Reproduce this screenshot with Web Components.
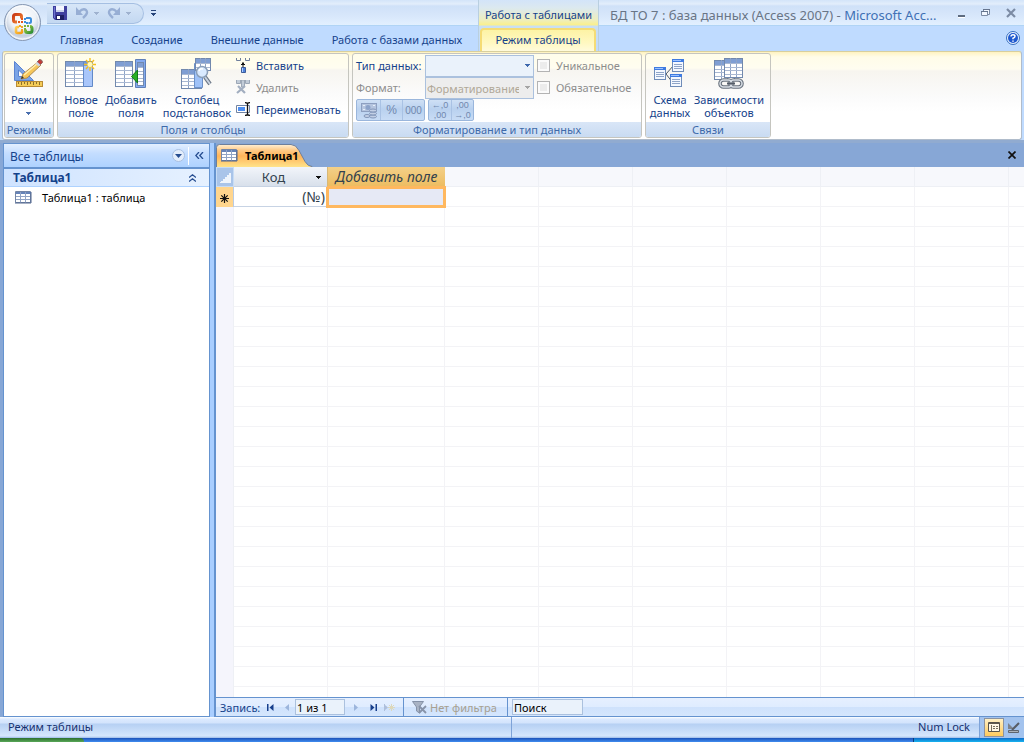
<!DOCTYPE html>
<html lang="ru">
<head>
<meta charset="utf-8">
<meta name="viewport" content="width=device-width, initial-scale=1">
<title>БД ТО 7 : база данных (Access 2007) - Microsoft Access</title>
<style>
html,body{margin:0;height:100%}
body{font:11px/13px "Noto Sans","Open Sans",sans-serif;color:#15428b;background:#bfdbff;overflow:hidden}
</style>
</head>
<body>
<access-window></access-window>
<script>
const RESET = `*{box-sizing:border-box}button,input,select{font:inherit;color:inherit;margin:0;padding:0;border:0;background:none}a{color:inherit;text-decoration:none}`;

function define(name, html) {
  const template = document.createElement('template');
  template.innerHTML = `<style>${RESET}</style>` + html;
  customElements.define(name, class extends HTMLElement {
    constructor() {
      super();
      this.attachShadow({mode: 'open'}).append(template.content.cloneNode(true));
    }
  });
}

const gridTable = (x, y, w, h, cols, rows) => {
  let s = `<rect x="${x + .5}" y="${y + .5}" width="${w}" height="${h}" fill="#fff" stroke="#7289ad"/><path fill="#7f9ed3" d="M${x + 1} ${y + 1}h${w - 1}v4h-${w - 1}z"/>`;
  for (let i = 1; i < cols; i++) s += `<path stroke="#8ea3c6" d="M${x + .5 + Math.round(w * i / cols)} ${y}v${h}"/>`;
  for (let i = 0; i < rows; i++) s += `<path stroke="#a9b8d2" d="M${x + 1} ${y + 5.5 + Math.round((h - 5) * i / rows)}h${w - 1}"/>`;
  return s;
};
const listBox = (x, y) => `<rect x="${x + .5}" y="${y + .5}" width="11" height="12" fill="#f4f8ff" stroke="#6f8cb8"/><path fill="#3f7be0" d="M${x} ${y}h12v3h-12z"/><path fill="#9cc2ff" d="M${x + 1} ${y + 1}h8v1h-8z"/><path stroke="#8fa5c8" d="M${x + 2} ${y + 5.5}h8m-8 2h8m-8 2h8"/>`;
const ICONS = {
  office: [40, 40, `<defs><radialGradient id="o" cx=".5" cy=".35" r=".65"><stop offset="0" stop-color="#fff"/><stop offset=".55" stop-color="#eef2f8"/><stop offset=".8" stop-color="#c3cede"/><stop offset="1" stop-color="#e7eef8"/></radialGradient><linearGradient id="r" x1="0" y1="0" x2="1" y2="1"><stop offset="0" stop-color="#c93a17"/><stop offset="1" stop-color="#f58a35"/></linearGradient><linearGradient id="y" x1="0" y1="0" x2="1" y2="1"><stop offset="0" stop-color="#ffcf57"/><stop offset="1" stop-color="#f39a12"/></linearGradient><linearGradient id="gr" x1="0" y1="0" x2="1" y2="1"><stop offset="0" stop-color="#a2cc3d"/><stop offset="1" stop-color="#2f8f35"/></linearGradient></defs><circle cx="20.500" cy="20.500" r="18" fill="url(#o)" stroke="#8597b3"/><circle cx="20.500" cy="20.500" r="16.500" fill="none" stroke="#fff" opacity=".8"/><g fill="none"><path stroke="url(#r)" stroke-width="3" d="M15 20h-1.500q-2 0-2-2v-3.500q0-2 2-2h4q2 0 2 2v2"/><path stroke="#e2561f" stroke-width="2" stroke-dasharray="2 1" d="M16 20h4v-4"/><path stroke="#3c8edb" stroke-width="2" d="M24 16h3.500q1.500 0 1.500 1.500v2q0 1.500-1.500 1.500h-1"/><path stroke="#3c8edb" stroke-width="2" stroke-dasharray="2 1" d="M23 16v5h4"/><path stroke="url(#y)" stroke-width="2.600" d="M17 25h-1.500q-1.500 0-1.500 1.500v3q0 1.500 1.500 1.500h3q1.500 0 1.500-1.500v-1"/><path stroke="#efa624" stroke-width="2" stroke-dasharray="2 1" d="M17 24h3v5"/><path stroke="url(#gr)" stroke-width="3" d="M28 24.500q2 0 2 2v2q0 2-2 2h-2.500q-2 0-2-2v-1"/><path stroke="#7bb33a" stroke-width="2" stroke-dasharray="2 1" d="M23 28v-4h5"/></g>`],
  save: [14, 14, `<path fill="#3f3f9e" d="M0 0h14v14H2l-2-2z"/><path fill="#6d72d0" d="M1 1h1v11h-1z"/><path fill="#f4f6ff" d="M3 0h8v6h-8z"/><path fill="#c9d0ec" d="M3 4h8v2h-8z"/><path fill="#1d1d62" d="M3 9h8v5h-8z"/><path fill="#fff" d="M4 10h3v3h-3z"/>`],
  undo: [14, 12, `<path fill="none" stroke="#97aed4" stroke-width="2.400" d="M4 5q4-4 7-2 3 3-3 8"/><path fill="#97aed4" d="M1 0v8h7z"/>`],
  redo: [14, 12, `<path fill="none" stroke="#97aed4" stroke-width="2.400" d="M10 5q-4-4-7-2-3 3 3 8"/><path fill="#97aed4" d="M13 0v8h-7z"/>`],
  arrow: [5, 3, `<path fill="currentColor" d="M0 0h5v1h-1v1h-1v1h-1v-1h-1v-1h-1z"/>`],
  custom: [5, 7, `<path fill="currentColor" d="M0 0h5v1h-5zM0 3h5v1h-1v1h-1v1h-1v-1h-1v-1h-1z"/>`],
  min: [9, 10, `<path fill="#fff" d="M1 9h7v1h-7z"/><path fill="#5d6b80" d="M1 7h7v2h-7z"/>`],
  restore: [10, 10, `<path fill="#f2f7ff" stroke="#7c8ba4" d="M2.500 1.500h6v5h-6z"/><path fill="#f2f7ff" stroke="#7c8ba4" d="M.500 3.500h6v4h-6z"/><path fill="#66758e" d="M2 1h7v1h-7zM0 3h7v1h-7z"/>`],
  close: [10, 10, `<path fill="none" stroke="#7c8ba4" stroke-width="2.200" d="M1 1l8 8M9 1l-8 8"/>`],
  help: [14, 14, `<circle cx="7" cy="7" r="6.500" fill="#e9f3ff" stroke="#386fc0"/><circle cx="7" cy="7" r="5" fill="#1f59cf"/><path fill="none" stroke="#fff" stroke-width="1.500" d="M5 5.500q0-1.800 2-1.800t2 1.500q0 1.200-2 2v1M7 9.500v1.200"/>`],
  design: [32, 32, `<path fill="#7ba4e6" stroke="#5b84d0" d="M1.500 3.500v19h19z"/><path fill="#fdfcf8" stroke="#5b84d0" d="M5.500 12v6.500h7z"/><path d="M8 21l2-5L25 4l3 3-14 13z" fill="#f6c65a" stroke="#b08a4c"/><path d="M11 17l14-12" stroke="#fff0b0" stroke-width="1.500"/><path d="M24 4l2.500-2.500q3 0 3 3L27 7z" fill="#c33c35" stroke="#8d6a67"/><path d="M22.500 5.500l3 3 2-1.500-3-3z" fill="#ccd5df"/><path d="M8 21l1-3 2 2z" fill="#333"/><rect x="3.500" y="23.500" width="26" height="5" fill="#f5cc58" stroke="#b98b34"/><path stroke="#8d712c" d="M5.500 24v2m3-2v3m3-3v2m3-2v3m3-3v2m3-2v3m3-3v2m3-2v3"/>`],
  newField: [32, 32, gridTable(0, 3, 18, 25, 2, 5) + `<path fill="#a9c6fa" stroke="#6289c8" d="M18.500 3.500h9v25h-9z"/><path fill="#7898d0" d="M19 4h8v4h-8z"/><path stroke="#f5c020" stroke-width="1.400" d="M25 0v13M19 6.500h12M21 2l8 9M29 2l-8 9"/><circle cx="25" cy="6.500" r="2.500" fill="#fff9ba"/>`],
  addField: [32, 32, gridTable(0, 3, 17, 25, 2, 5) + `<path fill="#83aaf0" stroke="#6080b8" d="M20.500 1.500h10v28h-10z"/>` + gridTable(22, 4, 6, 23, 1, 5) + `<path fill="#27ae25" stroke="#137816" d="M22.500 12v13l-6-6.500z"/>`],
  lookup: [32, 32, gridTable(0, 11, 20, 19, 3, 4) + `<path fill="#9fc2f8" stroke="#6c91c8" d="M13.500 5.500h8v24h-8z"/>` + gridTable(14, 0, 15, 12, 3, 2) + `<path stroke="#697584" stroke-width="4" d="M24 19l5 7"/><path stroke="#c8d2df" stroke-width="2" d="M24 19l5 7"/><circle cx="21" cy="14" r="5.500" fill="#d9eaff" stroke="#8b9fb8" stroke-width="1.500"/><path d="M18 13q1-3 4-2" fill="none" stroke="#fff" stroke-width="1.500"/>`],
  insert: [14, 16, `<path fill="none" stroke="#6f7f9c" d="M.500 1v2.500h4V1M9.500 1v2.500h4V1"/><path stroke="#111" fill="none" d="M7 5v5M5 7.500h4M6 6.500h2"/><path fill="#4f83dd" stroke="#3c5c9a" d="M5.500 10.500h4v5h-4z"/><path fill="#b0ceff" d="M6 11h1v4h-1z"/>`],
  remove: [14, 14, `<path fill="#c2ccd8" stroke="#9ca7b6" d="M.500 0v3.500h4V0M9.500 0v3.500h4V0M5.500 0h3v7h-3z"/><path stroke="#a2aec0" stroke-width="2.200" d="M2 6l7 7M9 6l-8 7"/>`],
  rename: [16, 14, `<path fill="#fff" stroke="#7183a1" d="M.500 3.500h13v7h-13z"/><path fill="#4d8ff2" d="M2 5h7v4h-7z"/><path fill="none" stroke="#111" stroke-width="1.300" d="M9 .600q2 0 2.500 1 .500-1 2.500-1M11.500 1v11M9 13.400q2 0 2.500-1 .500 1 2.500 1"/>`],
  money: [18, 18, `<rect x="1.500" y="2.500" width="15" height="8" fill="#b5c5df" stroke="#8d9fc0"/><circle cx="8" cy="6.500" r="2.500" fill="#8ba2c9"/><path stroke="#e5edf9" d="M3 4.500h2m8 0h2m-12 4h2"/><g fill="#c2cfe5" stroke="#8296b9"><ellipse cx="13" cy="15.500" rx="3.500" ry="1.500"/><ellipse cx="13" cy="12.500" rx="3.500" ry="1.500"/><ellipse cx="13" cy="9.500" rx="3.500" ry="1.500"/><ellipse cx="7" cy="15" rx="3" ry="1.500"/></g>`],
  schema: [32, 32, `<path fill="none" stroke="#4e5968" d="M12 16l8-9M12 16l7 9"/>` + listBox(0, 9) + listBox(18, 1) + listBox(16, 16)],
  depends: [34, 32, gridTable(2, 2, 20, 19, 3, 4) + gridTable(12, 0, 18, 19, 3, 4) + `<g fill="none" stroke="#68717d" stroke-width="3.600"><rect x="8" y="22" width="12" height="7" rx="3.500"/><rect x="18" y="22" width="12" height="7" rx="3.500"/></g><g fill="none" stroke="#d7dde4" stroke-width="1.500"><rect x="8" y="22" width="12" height="7" rx="3.500"/><rect x="18" y="22" width="12" height="7" rx="3.500"/></g><path stroke="#545c68" stroke-width="2" d="M15 25.500h8"/>`],
  table: [17, 13, `<path fill="#fff" stroke="#7385a5" d="M.500.500h15v11h-15z"/><path fill="#6583b8" d="M1 1h15v2h-15z"/><path stroke="#91a4c5" d="M5.500 1v11M10.500 1v11M1 5.500h14M1 8.500h14"/><path stroke="#50648c" d="M0 12h16M16 1v11"/>`],
  chevronLeft: [9, 7, `<path fill="none" stroke="#274e91" stroke-width="1.300" d="M4 0L.800 3.500 4 7M8 0L4.800 3.500 8 7"/>`],
  chevronUp: [7, 8, `<path fill="none" stroke="#274e91" stroke-width="1.300" d="M0 3.500L3.500.800 7 3.500M0 7.500l3.500-2.700L7 7.500"/>`],
  dropCircle: [13, 13, `<circle cx="6.500" cy="6.500" r="6" fill="#e3edfb" stroke="#a8bfe0"/><path fill="#274e91" d="M3 5h7l-3.500 4z"/>`],
  blackClose: [8, 8, `<path stroke="#111" stroke-width="1.700" d="M.500.500l7 7M7.500.500l-7 7"/>`],
  star: [9, 9, `<path stroke="#111" stroke-width="1.200" d="M4.500 0v9M0 4.500h9M1.300 1.300l6.400 6.400M7.700 1.300L1.300 7.700"/>`],
  first: [7, 7, `<path fill="#173f8c" d="M0 0h1.500v7h-1.500zM6.500 0v7L2.500 3.500z"/>`],
  prev: [4, 7, `<path fill="#9cb5dc" d="M4 0v7L0 3.500z"/>`],
  next: [4, 7, `<path fill="#9cb5dc" d="M0 0v7l4-3.500z"/>`],
  last: [7, 7, `<path fill="#173f8c" d="M5.500 0h1.500v7h-1.500zM.500 0v7l4-3.500z"/>`],
  newRecord: [11, 7, `<path fill="#aebfdb" d="M0 0h1v7h-1zM1 1v5l3-2.500z"/><path stroke="#ddd8bb" d="M7.500 0v7M4 3.500h7M5 1l5 5M10 1l-5 5"/>`],
  filter: [15, 13, `<path fill="#a9b3c4" stroke="#8592a8" d="M.500.500h11L7.500 6v6l-3-2V6z"/><path stroke="#8793a9" stroke-width="1.800" d="M7 5l7 7M14 5l-7 7"/>`],
  sheetView: [12, 11, `<path fill="#fff8e6" stroke="#57534a" d="M.500.500h11v9h-11z"/><path fill="#5d584d" d="M1 1h10v1h-10z"/><path stroke="#77705f" d="M3.500 3v6M5 4.500h2m1 0h2M5 6.500h2m1 0h2"/>`],
  designView: [12, 12, `<path fill="#7d838c" d="M0 1v6h6z"/><path stroke="#565c66" stroke-width="2" d="M4 8l7-7"/><path fill="#aeb3ba" stroke="#5e646e" d="M.500 8.500h10v2h-10z"/>`]
};

customElements.define('ui-icon', class extends HTMLElement {
  constructor() {
    super();
    this.attachShadow({mode: 'open'});
  }
  connectedCallback() {
    const [w, h, body] = ICONS[this.getAttribute('name')];
    this.shadowRoot.innerHTML = `<style>:host{display:inline-flex;flex:none}svg{display:block}</style><svg width="${w}" height="${h}" viewBox="0 0 ${w} ${h}" aria-hidden="true">${body}</svg>`;
  }
});

define('quick-access', `<style>
:host{display:flex;align-items:center;height:26px;padding-left:47px;color:#27447a}
.bar{display:flex;align-items:center;gap:8px;height:21px;width:97px;padding:0 6px;border:1px solid #a5bfe2;border-left:0;border-radius:0 11px 11px 0;background:linear-gradient(#d7e6f8,#c3d8f1)}
button{display:flex;align-items:center}
.muted{color:#9fb2cf;gap:5px}.more{margin-left:7px}
</style>
<div class="bar"><button aria-label="Сохранить"><ui-icon name="save"></ui-icon></button><button class="muted" aria-label="Отменить"><ui-icon name="undo"></ui-icon><ui-icon name="arrow"></ui-icon></button><button class="muted" aria-label="Вернуть"><ui-icon name="redo"></ui-icon><ui-icon name="arrow"></ui-icon></button></div>
<button class="more" aria-label="Настройка панели"><ui-icon name="custom"></ui-icon></button>`);

define('window-header', `<style>
:host{display:flex;flex:none;height:51px;position:relative;background:linear-gradient(#d3e4f9 0,#e3eefb 4px,#cfe1f8 6px,#d8e7fb 16px,#e2f0ff 25px,#b0d4f5 25px,#b0d4f5 26px,#bfdbff 26px)}
.office{position:absolute;left:2px;top:2px;z-index:1}
.left{flex:0 0 478px}
.tabs{display:flex;padding-left:46px;height:25px;align-items:center}
.tabs a{padding:2px 14px 0}
.context{flex:none;width:121px;border:solid #b9cfe0;border-width:0 1px;background:linear-gradient(#d3e4f9 0,#dce9ef 8px,#eeeebd 20px,#fbf08b 25px,#cadff2 26px,#bfdbff 51px);display:flex;flex-direction:column}
.caption{height:28px;padding-top:8px;text-align:center;white-space:nowrap}
.active{flex:1;margin:0 2px 0 1px;border:2px solid #f5dc75;border-bottom:0;border-radius:4px 4px 0 0;background:linear-gradient(#fdf3a5,#fff8c0 60%,#fffbdc);text-align:center;padding-top:3px}
.right{flex:1;min-width:0}
.title{display:flex;height:26px;align-items:center;padding:3px 8px 0 11px}
h1{flex:1;min-width:0;margin:0;font-size:13px;line-height:16px;font-weight:400;color:#697586;white-space:nowrap}
h1 span{color:#4070b5}
.controls{display:flex;gap:15px;padding-bottom:4px}
.controls button,.help{display:flex}
.help{margin:5px 4px 0 auto}
</style>
<button class="office" aria-label="Кнопка Office"><ui-icon name="office"></ui-icon></button>
<div class="left"><quick-access></quick-access><nav class="tabs"><a href="#">Главная</a><a href="#">Создание</a><a href="#">Внешние данные</a><a href="#">Работа с базами данных</a></nav></div>
<div class="context"><div class="caption">Работа с таблицами</div><a class="active" href="#">Режим таблицы</a></div>
<div class="right"><div class="title"><h1>БД ТО 7 : база данных (Access 2007) - <span>Microsoft Acc...</span></h1><div class="controls"><button aria-label="Свернуть"><ui-icon name="min"></ui-icon></button><button aria-label="Восстановить"><ui-icon name="restore"></ui-icon></button><button aria-label="Закрыть"><ui-icon name="close"></ui-icon></button></div></div><button class="help" aria-label="Справка"><ui-icon name="help"></ui-icon></button></div>`);

define('ribbon-group', `<style>
:host{display:flex;flex-direction:column;flex:none;border:1px solid #c5c5bf;border-radius:3px;overflow:hidden;background:linear-gradient(#fffdea 0,#fffdf0 14px,#f7f5f0 16px,#fbfbfb 40px,#fff 56px)}
.body{flex:1;display:flex;min-height:0}
.label{height:15px;line-height:15px;text-align:center;color:#3e6aaa;background:linear-gradient(#d9e6f7,#c9dbf2);white-space:nowrap}
</style><div class="body"><slot></slot></div><div class="label"><slot name="label"></slot></div>`);

define('ribbon-button', `<style>
:host{display:block;flex:none}
button{display:flex;flex-direction:column;align-items:center;width:100%;height:100%;padding-top:4px;white-space:nowrap}
.text{display:block;margin-top:3px;text-align:center}
</style><button><slot name="icon"></slot><span class="text"><slot></slot></span></button>`);

define('command-button', `<style>
:host{display:block}
:host([off]){color:#8d8d8d}
button{display:flex;align-items:center;height:22px;white-space:nowrap}
.icon{display:flex;width:20px}
</style><button><span class="icon"><slot name="icon"></slot></span><slot></slot></button>`);

define('format-controls', `<style>
:host{display:grid;grid-template-columns:69px 109px auto;grid-template-rows:22px 22px 22px;align-items:center;padding:1px 3px 0;flex:1}
label{padding-bottom:1px}
.off{color:#8d8d8d}
.combo{position:relative;display:flex;height:22px}
.combo ui-icon{position:absolute;right:4px;top:9px;pointer-events:none;color:#3c67ad}
select{appearance:none;width:109px;height:22px;border:1px solid #abc1de;background:#eaf2fb;color:#15428b;padding:0 14px 0 1px}
select:disabled{background:#ededed;color:#b0a898;opacity:1}.combo.dis ui-icon{color:#a5a5a5}
.check{display:flex;align-items:center;gap:6px;padding-left:3px;color:#8d8d8d}
input{appearance:none;width:13px;height:13px;border:1px solid #b3b3b3;background:#ececec;box-shadow:inset 0 0 0 2px #fbfbfb}
.bar{grid-column:1/-1;display:flex;gap:3px}
.set{display:flex;border:1px solid #9ab6dc;border-radius:2px;background:linear-gradient(#cfe0f5,#b9d1ef 45%,#c8dcf5)}
.set button{width:22px;height:20px;display:flex;align-items:center;justify-content:center;color:#7188ae}
.set.one button:first-child{width:23px}
.set button+button{border-left:1px solid #a9c2e4}
.num{font-family:"Liberation Sans",sans-serif;font-size:12px}.set .zeros{font-size:10px}
.dec{font:9px/10px "Liberation Sans",sans-serif}
.dec span{display:block;text-align:right}
</style>
<label for="type">Тип данных:</label><span class="combo"><select id="type"><option></option></select><ui-icon name="arrow"></ui-icon></span>
<label class="check"><input type="checkbox">Уникальное</label>
<label class="off" for="fmt">Формат:</label><span class="combo dis"><select id="fmt" disabled><option>Форматирование</option></select><ui-icon name="arrow"></ui-icon></span>
<label class="check"><input type="checkbox">Обязательное</label>
<div class="bar"><div class="set one"><button aria-label="Денежный"><ui-icon name="money"></ui-icon></button><button class="num">%</button><button class="num zeros">000</button></div><div class="set"><button class="dec">←,0<br>,00</button><button class="dec">,00<br>→,0</button></div></div>`);

define('access-ribbon', `<style>
:host{display:flex;flex:none;height:89px;gap:3px;margin:0 2px;padding:1px;border:1px solid #b0bccb;border-top-color:#d8cf9d;border-radius:3px;background:linear-gradient(#fff3c0 0,#fffce8 5px,#fffdf0 17px,#f7f5ef 19px,#fbfbfb 45px,#fff 60px);color:#15428b}
ribbon-group.a{width:50px}ribbon-group.b{width:292px}ribbon-group.c{width:290px}ribbon-group.d{width:126px}
.mode{width:48px}.n{width:46px}.f{width:54px}.l{width:78px}.s{width:48px}.o{width:70px}
.drop{display:block;line-height:9px;color:#4a6fae}
</style>
<ribbon-group class="a"><ribbon-button class="mode"><ui-icon slot="icon" name="design"></ui-icon>Режим<span class="drop"><ui-icon name="arrow"></ui-icon></span></ribbon-button><span slot="label">Режимы</span></ribbon-group>
<ribbon-group class="b"><ribbon-button class="n"><ui-icon slot="icon" name="newField"></ui-icon>Новое<br>поле</ribbon-button><ribbon-button class="f"><ui-icon slot="icon" name="addField"></ui-icon>Добавить<br>поля</ribbon-button><ribbon-button class="l"><ui-icon slot="icon" name="lookup"></ui-icon>Столбец<br>подстановок</ribbon-button><div class="cmds"><command-button><ui-icon slot="icon" name="insert"></ui-icon>Вставить</command-button><command-button off><ui-icon slot="icon" name="remove"></ui-icon>Удалить</command-button><command-button><ui-icon slot="icon" name="rename"></ui-icon>Переименовать</command-button></div><span slot="label">Поля и столбцы</span></ribbon-group>
<ribbon-group class="c"><format-controls></format-controls><span slot="label">Форматирование и тип данных</span></ribbon-group>
<ribbon-group class="d"><ribbon-button class="s"><ui-icon slot="icon" name="schema"></ui-icon>Схема<br>данных</ribbon-button><ribbon-button class="o"><ui-icon slot="icon" name="depends"></ui-icon>Зависимости<br>объектов</ribbon-button><span slot="label">Связи</span></ribbon-group>`);

define('nav-pane', `<style>
:host{display:flex;flex-direction:column;flex:none;width:207px;background:#fff;border:1px solid #6593cf}
.head{display:flex;align-items:center;height:25px;background:linear-gradient(#e3efff,#c4ddff 40%,#aed2ff);border-bottom:2px solid #6593cf}
h2{flex:1;margin:0;padding:2px 0 0 6px;font-size:12px;line-height:16px;font-weight:400}
button{display:flex;align-items:center;justify-content:center}
.collapse{width:21px;height:18px;margin-left:3px;border-left:1px solid #fff}
.group{display:flex;align-items:center;height:18px;padding:0 13px 0 9px;background:linear-gradient(90deg,#cfe3ff,#e6f1ff);border-bottom:1px solid #aed2ff;font-weight:700;font-size:12px;width:100%;justify-content:space-between}
.item{display:flex;align-items:center;gap:10px;height:21px;padding-left:11px;color:#000}
</style>
<div class="head"><h2>Все таблицы</h2><button aria-label="Выбор категории"><ui-icon name="dropCircle"></ui-icon></button><button class="collapse" aria-label="Свернуть область"><ui-icon name="chevronLeft"></ui-icon></button></div>
<button class="group">Таблица1<ui-icon name="chevronUp"></ui-icon></button>
<a class="item" href="#"><ui-icon name="table"></ui-icon>Таблица1 : таблица</a>`);

define('record-nav', `<style>
:host{display:flex;flex:none;height:19px;align-items:center;border-top:1px solid #6593cf;background:linear-gradient(#e6f0ff 0,#dfecff 50%,#cfe2fc 52%,#d5e6fd);padding-left:4px;color:#15428b}
button{display:flex;align-items:center}
input{height:16px;border:1px solid #abc1de;background:#eaf2fb;color:#000;padding:0 1px}
.pos{width:50px;margin:0 9px 0 6px}
.find{width:71px;margin-left:4px}
.nav{display:flex;gap:11px}
.after{display:flex;gap:12px;width:49px}.after button:last-child{margin-left:-5px}
.filter{align-self:stretch;width:105px;padding-left:8px;gap:3px;border:solid #6593cf;border-width:0 1px;color:#a8a090;white-space:nowrap}
.label{width:46px;margin-right:1px}
</style>
<label class="label" for="pos">Запись:</label><span class="nav"><button aria-label="Первая"><ui-icon name="first"></ui-icon></button><button aria-label="Предыдущая"><ui-icon name="prev"></ui-icon></button></span>
<input class="pos" id="pos" value="1 из 1"><span class="after"><button aria-label="Следующая"><ui-icon name="next"></ui-icon></button><button aria-label="Последняя"><ui-icon name="last"></ui-icon></button><button aria-label="Новая запись"><ui-icon name="newRecord"></ui-icon></button></span>
<button class="filter"><ui-icon name="filter"></ui-icon>Нет фильтра</button><input class="find" aria-label="Поиск" value="Поиск">`);

define('data-sheet', `<style>
:host{display:flex;flex-direction:column;flex:1;min-width:0;border-left:2px solid #6593cf;border-bottom:1px solid #6593cf}
.tabbar{display:flex;justify-content:space-between;align-items:center;height:24px;padding-right:8px;background:#87a7d6}
.tab{position:relative;display:flex;align-items:center;gap:7px;width:96px;height:24px;padding-left:5px;color:#000;font-weight:700}
.tab svg{position:absolute;left:0;top:0}.tab ui-icon,.tab span{position:relative}
.tabbar button{display:flex}
.sheet{flex:1;min-height:0;overflow:hidden;background:
linear-gradient(90deg,#f5f5fc 17px,#eef0f5 17px,#eef0f5 18px,transparent 18px),
linear-gradient(90deg,transparent 111px,#f3f3f6 111px,#f3f3f6 112px,transparent 112px),
repeating-linear-gradient(90deg,transparent 0,transparent 93px,#f3f3f6 93px,#f3f3f6 94px) 135px 0/100% 100% no-repeat,
repeating-linear-gradient(transparent 0,transparent 19px,#f3f3f6 19px,#f3f3f6 20px),#fff}
table{border-collapse:separate;border-spacing:0;table-layout:fixed;width:100%;font-size:13px;line-height:16px;color:#33424d}
col.sel{width:18px}col.id{width:93px}col.add{width:118px}
th,td{height:20px;padding:0;font-weight:400}
th{background:linear-gradient(#f2f5fa,#d8e0eb);border-bottom:1px solid #c7d3e4}
th.corner{background:linear-gradient(135deg,transparent 50%,#eef4fc 50%) 3px 4px/11px 11px no-repeat,#a9c4e9;border:1px solid #c7dcf5}
th.id{position:relative}
th.id span{display:block;padding-right:14px}
th.id ui-icon{position:absolute;right:6px;top:9px;color:#111}
th.add{background:linear-gradient(#f4d088,#edbd62);font-size:14px;font-style:italic;border-left:1px solid #d7b877;white-space:nowrap}
th.rest{background:repeating-linear-gradient(90deg,transparent 0,transparent 93px,#eef0f5 93px,#eef0f5 94px),#f7f8fc;border-color:#eef0f5}
td.star{background:#ffd58d;text-align:center;border-right:1px solid #b8cbe5}td.star ui-icon{vertical-align:middle}
td.id{text-align:right;border-bottom:1px solid #c7d3e4;padding-right:2px;font-size:14px}
td.cell{background:#e6e9f5;outline:3px solid #ffb85f;outline-offset:-2px}
</style>
<div class="tabbar"><div class="tab"><svg width="100" height="24" viewBox="0 0 100 24" aria-hidden="true"><defs><linearGradient id="g" x2="0" y2="1"><stop offset="0" stop-color="#fff0d6"/><stop offset=".25" stop-color="#ffca87"/><stop offset=".5" stop-color="#ffb45a"/><stop offset="1" stop-color="#ffe58c"/></linearGradient></defs><path fill="url(#g)" stroke="#6e7f9b" d="M.500 24.500V4.500q0-3 3-3H75q5 0 8 6l6 11q3 5 7 5v1"/></svg><ui-icon name="table"></ui-icon><span>Таблица1</span></div><button aria-label="Закрыть таблицу"><ui-icon name="blackClose"></ui-icon></button></div>
<div class="sheet"><table><colgroup><col class="sel"><col class="id"><col class="add"><col></colgroup><thead><tr><th class="corner"></th><th class="id"><span>Код</span><ui-icon name="arrow"></ui-icon></th><th class="add">Добавить поле</th><th class="rest"></th></tr></thead><tbody><tr><td class="star"><ui-icon name="star"></ui-icon></td><td class="id">(№)</td><td class="cell"></td><td></td></tr></tbody></table></div>
<record-nav></record-nav>`);

define('status-bar', `<style>
:host{display:flex;flex:none;height:21px;align-items:stretch;background:linear-gradient(#fff 0,#dceaff 2px,#d3e4fc 6px,#b6d0f3 7px,#d6e7fd 19px,#9dbbe8 21px);color:#15306f;line-height:20px}
.mode{flex:0 0 50%;padding-left:8px;border-right:1px solid #7ea3d8}
.lock{flex:1;display:flex;justify-content:flex-end;padding-right:9px;border-right:1px solid #7ea3d8}
.views{display:flex;width:44px;padding:1px 0 1px 4px;background:#a3c3ee}
button{display:flex;align-items:center;justify-content:center;width:20px}
.on{background:linear-gradient(#fff0c4,#ffca5c);border:1px solid #8b92a0}
</style>
<span class="mode">Режим таблицы</span><span class="lock">Num Lock</span><span class="views"><button class="on" aria-label="Режим таблицы"><ui-icon name="sheetView"></ui-icon></button><button aria-label="Конструктор"><ui-icon name="designView"></ui-icon></button></span>`);

define('task-strip', `<style>
:host{display:flex;flex:none;height:4px;background:linear-gradient(#1d52b8,#3f8cf0)}
.start{width:84px;background:linear-gradient(#2d6e2d,#58a858);border-radius:0 4px 0 0}
.tray{width:111px;margin-left:auto;border-left:1px solid #0c3b7a;background:linear-gradient(#0f6ac8,#17b4f0)}
</style><span class="start"></span><span class="tray"></span>`);

define('access-window', `<style>
:host{display:flex;flex-direction:column;height:100vh;background:#bfdbff}
.work{flex:1;display:flex;min-height:0;gap:4px;padding-left:3px;border-top:3px solid #91abd0;background:linear-gradient(90deg,#87a7d6 3px,#a9ceff 3px)}
.work data-sheet{min-width:0}
</style>
<window-header></window-header><access-ribbon></access-ribbon>
<main class="work"><nav-pane></nav-pane><data-sheet></data-sheet></main>
<status-bar></status-bar><task-strip></task-strip>`);
</script>
</body>
</html>
